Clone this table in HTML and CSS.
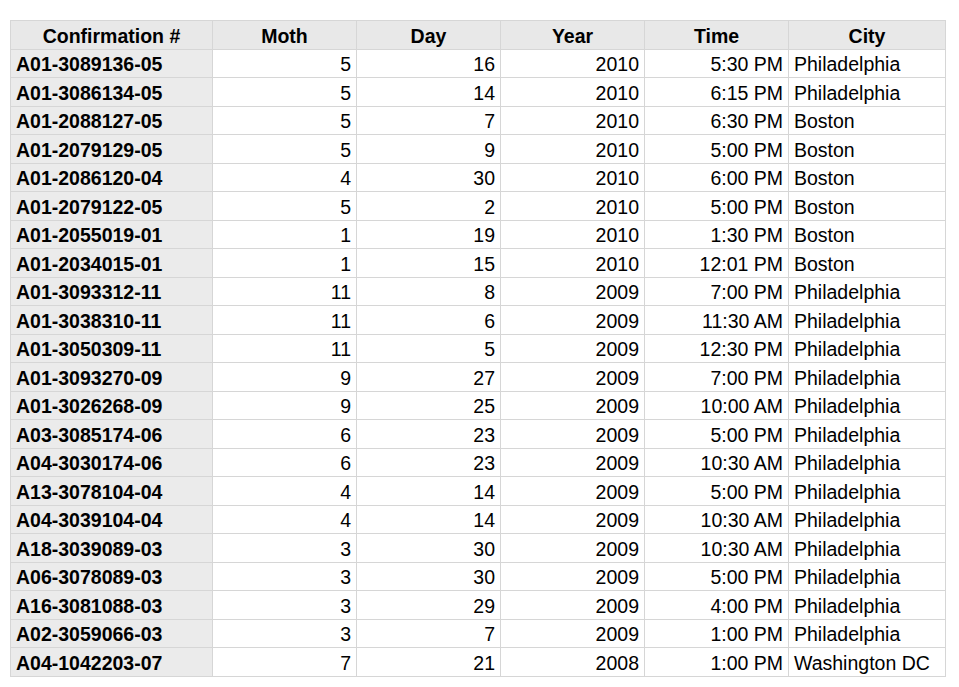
FILE: index.html
```html
<!DOCTYPE html>
<html>
<head>
<meta charset="utf-8">
<link rel="stylesheet" href="styles.css">
</head>
<body>
<table class="sheet">
<colgroup>
<col class="c-conf"><col class="c-num"><col class="c-num"><col class="c-num"><col class="c-num"><col class="c-city">
</colgroup>
<thead>
<tr><th>Confirmation #</th><th>Moth</th><th>Day</th><th>Year</th><th>Time</th><th>City</th></tr>
</thead>
<tbody>
<tr><td class="key">A01-3089136-05</td><td class="n">5</td><td class="n">16</td><td class="n">2010</td><td class="n">5:30 PM</td><td>Philadelphia</td></tr>
<tr><td class="key">A01-3086134-05</td><td class="n">5</td><td class="n">14</td><td class="n">2010</td><td class="n">6:15 PM</td><td>Philadelphia</td></tr>
<tr><td class="key">A01-2088127-05</td><td class="n">5</td><td class="n">7</td><td class="n">2010</td><td class="n">6:30 PM</td><td>Boston</td></tr>
<tr><td class="key">A01-2079129-05</td><td class="n">5</td><td class="n">9</td><td class="n">2010</td><td class="n">5:00 PM</td><td>Boston</td></tr>
<tr><td class="key">A01-2086120-04</td><td class="n">4</td><td class="n">30</td><td class="n">2010</td><td class="n">6:00 PM</td><td>Boston</td></tr>
<tr><td class="key">A01-2079122-05</td><td class="n">5</td><td class="n">2</td><td class="n">2010</td><td class="n">5:00 PM</td><td>Boston</td></tr>
<tr><td class="key">A01-2055019-01</td><td class="n">1</td><td class="n">19</td><td class="n">2010</td><td class="n">1:30 PM</td><td>Boston</td></tr>
<tr><td class="key">A01-2034015-01</td><td class="n">1</td><td class="n">15</td><td class="n">2010</td><td class="n">12:01 PM</td><td>Boston</td></tr>
<tr><td class="key">A01-3093312-11</td><td class="n">11</td><td class="n">8</td><td class="n">2009</td><td class="n">7:00 PM</td><td>Philadelphia</td></tr>
<tr><td class="key">A01-3038310-11</td><td class="n">11</td><td class="n">6</td><td class="n">2009</td><td class="n">11:30 AM</td><td>Philadelphia</td></tr>
<tr><td class="key">A01-3050309-11</td><td class="n">11</td><td class="n">5</td><td class="n">2009</td><td class="n">12:30 PM</td><td>Philadelphia</td></tr>
<tr><td class="key">A01-3093270-09</td><td class="n">9</td><td class="n">27</td><td class="n">2009</td><td class="n">7:00 PM</td><td>Philadelphia</td></tr>
<tr><td class="key">A01-3026268-09</td><td class="n">9</td><td class="n">25</td><td class="n">2009</td><td class="n">10:00 AM</td><td>Philadelphia</td></tr>
<tr><td class="key">A03-3085174-06</td><td class="n">6</td><td class="n">23</td><td class="n">2009</td><td class="n">5:00 PM</td><td>Philadelphia</td></tr>
<tr><td class="key">A04-3030174-06</td><td class="n">6</td><td class="n">23</td><td class="n">2009</td><td class="n">10:30 AM</td><td>Philadelphia</td></tr>
<tr><td class="key">A13-3078104-04</td><td class="n">4</td><td class="n">14</td><td class="n">2009</td><td class="n">5:00 PM</td><td>Philadelphia</td></tr>
<tr><td class="key">A04-3039104-04</td><td class="n">4</td><td class="n">14</td><td class="n">2009</td><td class="n">10:30 AM</td><td>Philadelphia</td></tr>
<tr><td class="key">A18-3039089-03</td><td class="n">3</td><td class="n">30</td><td class="n">2009</td><td class="n">10:30 AM</td><td>Philadelphia</td></tr>
<tr><td class="key">A06-3078089-03</td><td class="n">3</td><td class="n">30</td><td class="n">2009</td><td class="n">5:00 PM</td><td>Philadelphia</td></tr>
<tr><td class="key">A16-3081088-03</td><td class="n">3</td><td class="n">29</td><td class="n">2009</td><td class="n">4:00 PM</td><td>Philadelphia</td></tr>
<tr><td class="key">A02-3059066-03</td><td class="n">3</td><td class="n">7</td><td class="n">2009</td><td class="n">1:00 PM</td><td>Philadelphia</td></tr>
<tr><td class="key">A04-1042203-07</td><td class="n">7</td><td class="n">21</td><td class="n">2008</td><td class="n">1:00 PM</td><td>Washington DC</td></tr>
</tbody>
</table>
</body>
</html>
```
FILE: styles.css
```css
html, body {
  margin: 0;
  padding: 0;
  background: #ffffff;
}
body {
  padding: 20px 0 0 10px;
  font-family: "Liberation Sans", Arial, Helvetica, sans-serif;
  font-size: 19.5px;
  color: #000;
}
.sheet {
  border-collapse: collapse;
  table-layout: fixed;
  width: 935px;
}
.c-conf { width: 202px; }
.c-num { width: 144px; }
.c-city { width: 157px; }
.sheet th, .sheet td {
  border: 1px solid #d6d6d6;
  height: 28.5px;
  padding: 2px 5px 0 5px;
  box-sizing: border-box;
  line-height: 22px;
  white-space: nowrap;
  overflow: hidden;
  vertical-align: middle;
}
.sheet th {
  background: #e8e8e8;
  font-weight: bold;
  text-align: center;
}
.sheet td { text-align: left; }
.sheet td.n { text-align: right; }
.sheet td.key {
  background: #ebebeb;
  font-weight: bold;
}
```
